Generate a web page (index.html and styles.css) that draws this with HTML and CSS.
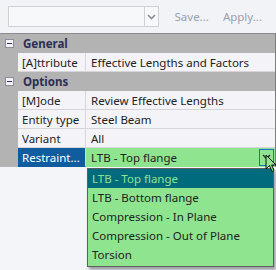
FILE: index.html
```html
<!DOCTYPE html>
<html lang="en">
<head>
    <meta charset="UTF-8">
    <title>Properties</title>
    <link rel="stylesheet" href="styles.css">
</head>
<body>

    <div class="toolbar">
        <div class="combo">
            <div class="combo-text"></div>
            <div class="combo-btn">
                <svg width="9" height="6" viewBox="0 0 9 6"><path d="M1 1 L4.5 4.5 L8 1" fill="none" stroke="#8a8f98" stroke-width="1.6"/></svg>
            </div>
        </div>
        <span class="tool-link">Save...</span>
        <span class="tool-link">Apply...</span>
    </div>

    <div class="grid">
        <div class="category">
            <span class="toggle"></span>
            <span class="cat-name">General</span>
        </div>
        <div class="row">
            <div class="gutter"></div>
            <div class="label">[A]ttribute</div>
            <div class="value">Effective Lengths and Factors</div>
        </div>
        <div class="category">
            <span class="toggle"></span>
            <span class="cat-name">Options</span>
        </div>
        <div class="row">
            <div class="gutter"></div>
            <div class="label">[M]ode</div>
            <div class="value">Review Effective Lengths</div>
        </div>
        <div class="row">
            <div class="gutter"></div>
            <div class="label">Entity type</div>
            <div class="value">Steel Beam</div>
        </div>
        <div class="row">
            <div class="gutter"></div>
            <div class="label">Variant</div>
            <div class="value">All</div>
        </div>
        <div class="row active">
            <div class="gutter"></div>
            <div class="label">Restraint...</div>
            <div class="value">
                <span>LTB - Top flange</span>
                <span class="drop-btn">
                    <svg width="9" height="6" viewBox="0 0 9 6"><path d="M1 1 L4.5 4.5 L8 1" fill="none" stroke="#2b2b2b" stroke-width="1.3"/></svg>
                </span>
            </div>
        </div>

        <ul class="dropdown">
            <li class="selected">LTB - Top flange</li>
            <li>LTB - Bottom flange</li>
            <li>Compression - In Plane</li>
            <li>Compression - Out of Plane</li>
            <li>Torsion</li>
        </ul>

        <svg class="cursor" width="12" height="20" viewBox="0 0 12 20">
            <path d="M1 1 L1 15 L4.5 11.5 L7 17.5 L9 16.6 L6.6 11 L11 11 Z" fill="#8fe68f" stroke="#111" stroke-width="1"/>
        </svg>
    </div>

</body>
</html>
```

FILE: styles.css
```css
body {
    margin: 0;
    padding: 0;
    width: 276px;
    height: 270px;
    overflow: hidden;
    background: #f4f5f9;
    font-family: 'Noto Sans', 'DejaVu Sans', sans-serif;
    font-size: 11.5px;
    color: #222;
}

.toolbar {
    height: 33px;
    display: flex;
    align-items: center;
    padding-left: 8px;
    box-sizing: border-box;
    background: #f2f3f7;
}

.combo {
    width: 158px;
    height: 21px;
    display: flex;
    border: 1px solid #cdd1d8;
    background: #f7f8fa;
    box-sizing: border-box;
    margin-right: 16px;
}

.combo-text {
    flex: 1;
}

.combo-btn {
    width: 13px;
    border-left: 1px solid #cdd1d8;
    display: flex;
    align-items: center;
    justify-content: center;
}

.tool-link {
    color: #9aa1ad;
    margin-right: 14px;
}

.grid {
    position: relative;
    border-top: 1px solid #8c8c8c;
    border-right: 1px solid #7c7c7c;
    width: 275px;
}

.category {
    height: 19px;
    display: flex;
    align-items: center;
    background: #b3b3b3;
}

.toggle {
    width: 9px;
    height: 9px;
    margin: 0 9px 0 5px;
    background: #f4f4f8;
    border: 1px solid #8c8c9c;
    box-sizing: border-box;
    position: relative;
}

.toggle::after {
    content: "";
    position: absolute;
    left: 1px;
    right: 1px;
    top: 3px;
    height: 1px;
    background: #2a3266;
}

.cat-name {
    font-weight: bold;
    color: #2b2f55;
}

.row {
    height: 19px;
    display: flex;
    background: #f4f4f8;
}

.gutter {
    width: 18px;
    background: #b3b3b3;
}

.label {
    width: 68px;
    padding-left: 4px;
    box-sizing: border-box;
    border-right: 1px solid #d5d5da;
    border-bottom: 1px solid #d5d5da;
    display: flex;
    align-items: center;
    white-space: nowrap;
    overflow: hidden;
}

.value {
    flex: 1;
    padding-left: 5px;
    border-bottom: 1px solid #d5d5da;
    display: flex;
    align-items: center;
    white-space: nowrap;
}

.row.active .label {
    background: #0f5c9e;
    color: #fff;
    border-bottom-color: #0f5c9e;
}

.row.active .value {
    background: #8fe48f;
    border-bottom-color: #8fe48f;
    justify-content: space-between;
}

.drop-btn {
    width: 15px;
    height: 17px;
    border: 1px solid #1c74c9;
    box-sizing: border-box;
    display: flex;
    align-items: center;
    justify-content: center;
    margin-right: 1px;
}

.dropdown {
    position: absolute;
    left: 87px;
    top: 134px;
    width: 187px;
    margin: 0;
    padding: 0 0 2px;
    list-style: none;
    background: #8fe48f;
    border: 1px solid #5e5e5e;
    box-sizing: border-box;
    box-shadow: 2px 3px 3px rgba(0, 0, 0, 0.35);
}

.dropdown li {
    height: 19px;
    line-height: 19px;
    padding-left: 4px;
}

.dropdown li.selected {
    background: #006b7c;
    color: #8fe48f;
}

.cursor {
    position: absolute;
    left: 265px;
    top: 120px;
}
```
